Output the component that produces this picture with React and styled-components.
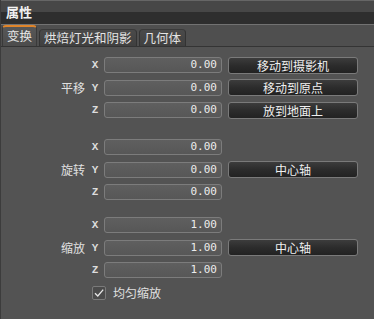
import React from 'react'
import styled, { createGlobalStyle } from 'styled-components'

const cjk = `"Noto Sans CJK SC", "Noto Sans", sans-serif`
const mono = `"DejaVu Sans Mono", "Liberation Mono", monospace`
const axisFont = `"Liberation Mono", "DejaVu Sans Mono", monospace`

const GlobalStyle = createGlobalStyle`
  html, body {
    margin: 0;
    padding: 0;
    background: #535353;
    overflow: hidden;
  }
  * { box-sizing: border-box; }
`

const groups = [
  {
    name: '平移',
    top: 10,
    rows: [
      { axis: 'X', value: '0.00', button: '移动到摄影机' },
      { axis: 'Y', value: '0.00', button: '移动到原点' },
      { axis: 'Z', value: '0.00', button: '放到地面上' }
    ]
  },
  {
    name: '旋转',
    top: 21,
    rows: [
      { axis: 'X', value: '0.00' },
      { axis: 'Y', value: '0.00', button: '中心轴' },
      { axis: 'Z', value: '0.00' }
    ]
  },
  {
    name: '缩放',
    top: 17,
    rows: [
      { axis: 'X', value: '1.00' },
      { axis: 'Y', value: '1.00', button: '中心轴' },
      { axis: 'Z', value: '1.00' }
    ]
  }
]

const tabs = ['变换', '烘焙灯光和阴影', '几何体']

const App = () => (
  <Panel>
    <GlobalStyle />
    <TitleBar>属性</TitleBar>
    <TabBar>
      {tabs.map((tab, i) => (
        <Tab key={tab} active={i === 0}>{tab}</Tab>
      ))}
    </TabBar>
    <Content>
      {groups.map(group => (
        <Group key={group.name} top={group.top}>
          {group.rows.map((row, i) => (
            <Row key={row.axis}>
              <GroupLabel>{i === 1 ? group.name : ''}</GroupLabel>
              <Axis>{row.axis}</Axis>
              <NumberField>{row.value}</NumberField>
              {row.button ? <Button>{row.button}</Button> : null}
            </Row>
          ))}
        </Group>
      ))}
      <CheckRow>
        <Check>
          <svg width="12" height="12" viewBox="0 0 12 12">
            <path d="M2 6.2 L4.8 9 L10.2 2.6" fill="none" stroke="#e8e8e8" strokeWidth="1.3" />
          </svg>
        </Check>
        <CheckText>均匀缩放</CheckText>
      </CheckRow>
    </Content>
  </Panel>
)

const Panel = styled.div`
  width: 374px;
  height: 319px;
  display: flex;
  flex-direction: column;
  background: #535353;
  border-left: 1px solid #3c3c3c;
  font-family: ${cjk};
  color: #e6e6e6;
`

const TitleBar = styled.div`
  height: 24px;
  flex: none;
  border-top: 1px solid #666;
  background: linear-gradient(#474747 0, #474747 11px, #2e2e2e 11px, #2e2e2e 100%);
  padding-left: 5px;
  font-size: 13px;
  font-weight: 700;
  line-height: 22px;
  color: #f2f2f2;
`

const TabBar = styled.div`
  height: 23px;
  flex: none;
  display: flex;
  align-items: flex-end;
  gap: 2px;
  padding-left: 1px;
  background: #4f4f4f;
  border-top: 1px solid #727272;
  border-bottom: 1px solid #343434;
`

const Tab = styled.div`
  height: ${p => (p.active ? 21 : 17)}px;
  padding: 0 4px;
  border-radius: 4px 4px 0 0;
  border: 1px solid ${p => (p.active ? '#3a3a3a' : '#333')};
  border-top: ${p => (p.active ? '2px solid #e0852a' : '1px solid #3a3a3a')};
  border-bottom: none;
  background: ${p => (p.active ? 'linear-gradient(#575757, #4c4c4c)' : 'linear-gradient(#4a4a4a, #404040)')};
  font-size: 12.5px;
  line-height: ${p => (p.active ? 18 : 16)}px;
  color: #e4e4e4;
  white-space: nowrap;
`

const Content = styled.div`
  display: flex;
  flex-direction: column;
`

const Group = styled.div`
  display: flex;
  flex-direction: column;
  gap: 6.5px;
  margin-top: ${p => p.top}px;
`

const Row = styled.div`
  display: flex;
  align-items: center;
  height: 16px;
`

const GroupLabel = styled.div`
  width: 87px;
  padding-right: 3px;
  text-align: right;
  font-size: 12px;
  color: #e0e0e0;
`

const Axis = styled.div`
  width: 14px;
  font-family: ${axisFont};
  font-size: 11px;
  font-weight: 700;
  color: #dcdcdc;
  text-align: center;
  margin-right: 2px;
`

const NumberField = styled.div`
  width: 118px;
  height: 16px;
  border: 1px solid #7c7c7c;
  border-radius: 3px;
  background: linear-gradient(#5f5f5f, #575757);
  font-family: ${mono};
  font-size: 11px;
  line-height: 14px;
  text-align: right;
  padding-right: 4px;
  color: #ececec;
`

const Button = styled.div`
  width: 130px;
  height: 17px;
  margin-left: 6px;
  border: 1px solid #7a7a7a;
  border-radius: 3px;
  background: linear-gradient(#3c3c3c, #2c2c2c 50%, #222);
  font-size: 12px;
  line-height: 15px;
  text-align: center;
  color: #f0f0f0;
`

const CheckRow = styled.div`
  display: flex;
  align-items: center;
  gap: 7px;
  margin-top: 7px;
  padding-left: 91px;
  height: 15px;
`

const Check = styled.div`
  width: 14px;
  height: 14px;
  border: 1px solid #7a7a7a;
  border-radius: 2px;
  background: #4b4b4b;
  display: flex;
  align-items: center;
  justify-content: center;
`

const CheckText = styled.div`
  font-size: 12px;
  color: #e0e0e0;
`

export default App
